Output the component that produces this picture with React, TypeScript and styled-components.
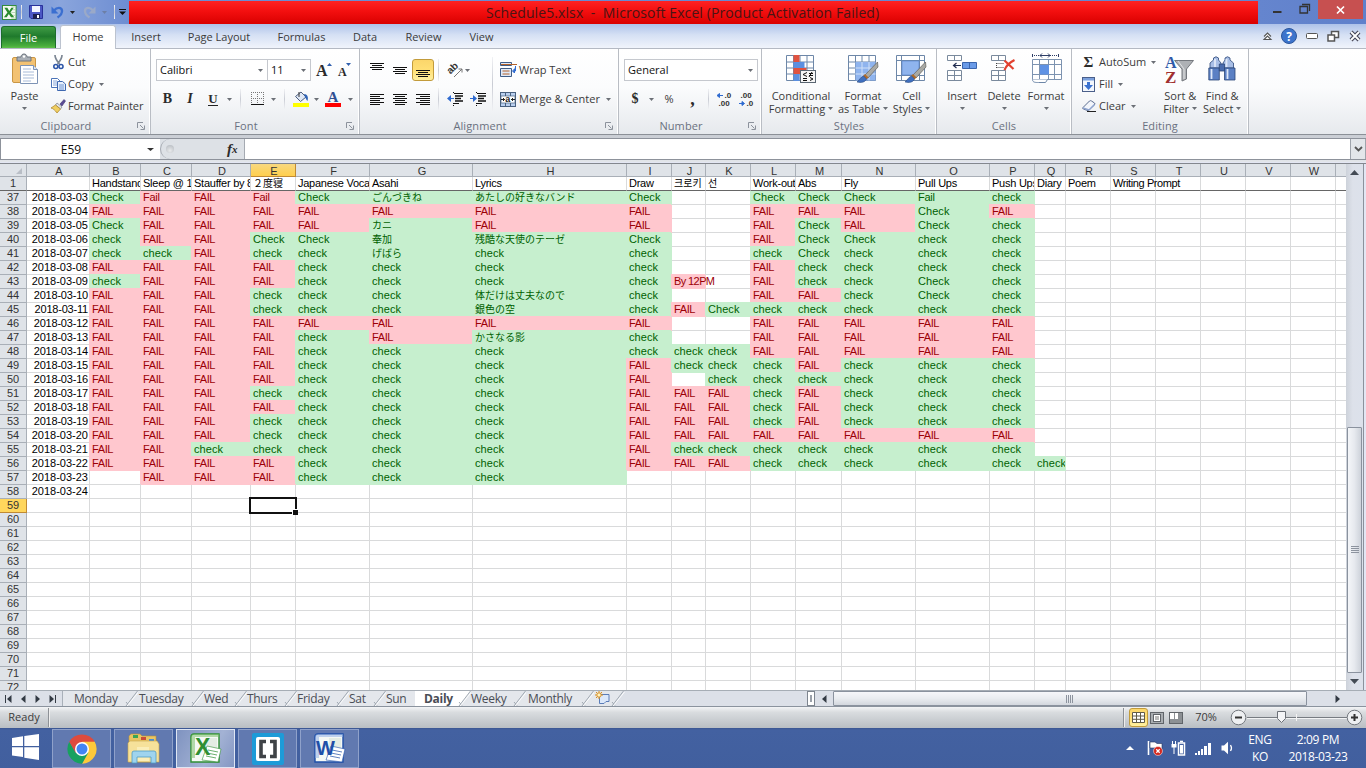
import React from 'react';
import styled, { createGlobalStyle, css } from 'styled-components';

const UI = `"Open Sans", "Noto Sans", sans-serif`;
const SHEET = `"Liberation Sans", "Noto Sans CJK JP", "Noto Sans CJK KR", sans-serif`;

const Global = createGlobalStyle`
  * { box-sizing: border-box; }
  body { margin: 0; background: #dfe3e8; overflow: hidden; }
  svg { display: block; flex: none; overflow: visible; }
`;

const Screen = styled.div`
  width: 1366px;
  height: 768px;
  display: flex;
  flex-direction: column;
  overflow: hidden;
  font-family: ${UI};
  font-size: 11px;
  color: #3b3b3b;
  white-space: pre;
`;

/* ---------- title bar ---------- */

const TitleBar = styled.header`
  height: 24px;
  display: flex;
  background: linear-gradient(90deg, #6d8fd3 0, #8aa5dc 60px, #6d8dd2 129px, #6585ce 1258px, #5f80cb 1366px);
`;

const QuickAccess = styled.div`
  width: 129px;
  display: flex;
  align-items: center;
  padding-left: 2px;
`;

const RedTitle = styled.div`
  width: 1129px;
  height: 23px;
  margin-top: 1px;
  display: flex;
  align-items: center;
  padding-left: 357px;
  background: linear-gradient(#fe2222, #f30f0f 45%, #d90000);
  color: #4a1414;
  font-size: 14px;
  letter-spacing: 0.1px;
`;

const WindowButtons = styled.div`
  display: flex;
  flex: 1;
`;

const CloseButton = styled.div`
  width: 45px;
  height: 19px;
  margin-left: 8px;
  display: flex;
  align-items: center;
  justify-content: center;
  background: #c75050;
`;

const Gap = styled.div<{ $w: number }>`
  flex: 0 0 ${(p) => p.$w}px;
`;

/* ---------- ribbon tabs ---------- */

const TabRow = styled.nav`
  height: 25px;
  display: flex;
  align-items: stretch;
  border-bottom: 1px solid #b4b9c3;
  background: linear-gradient(115deg, transparent 1333px, #6c8ed5 1352px), linear-gradient(#aec2e9, #d5e0f4 45%, #f0f4fb);
`;

const FileTab = styled.div`
  width: 55px;
  height: 22px;
  margin: 2px 0 0 1px;
  display: flex;
  align-items: center;
  justify-content: center;
  padding-bottom: 1px;
  border-radius: 3px 3px 0 0;
  border: 1px solid #1c6c2c;
  border-bottom: 0;
  background: linear-gradient(#3f9b45, #1f7a2c 45%, #4aae3d 90%, #5fc04a);
  color: #fff;
`;

const RibbonTab = styled.div<{ $w: number; $active?: boolean }>`
  width: ${(p) => p.$w}px;
  display: flex;
  align-items: center;
  justify-content: center;
  padding-top: 1px;
  ${(p) =>
    p.$active &&
    css`
      margin: 1px 0 -1px 4px;
      padding: 0 0 2px;
      background: #fff;
      border: 1px solid #bcc3cf;
      border-bottom: 0;
      border-radius: 3px 3px 0 0;
    `}
`;

const TabTools = styled.div`
  margin-left: auto;
  width: 106px;
  display: flex;
  align-items: center;
`;

/* ---------- ribbon ---------- */

const Ribbon = styled.section`
  height: 86px;
  display: flex;
  border-bottom: 1px solid #8b9097;
  background: linear-gradient(#fff, #fbfcfd 45%, #e6e9ed);
`;

const Group = styled.div<{ $w: number }>`
  width: ${(p) => p.$w}px;
  display: flex;
  flex-direction: column;
  border-right: 1px solid #b9bdc4;
  box-shadow: inset -1px 0 0 #fff;
`;

const GroupBody = styled.div`
  height: 69px;
  display: flex;
`;

const GroupFoot = styled.div`
  height: 16px;
  display: flex;
  align-items: center;
  justify-content: center;
  color: #6a7180;
  letter-spacing: 0.1px;
`;

const FootLabel = styled.div<{ $end?: boolean }>`
  flex: 1;
  text-align: center;
  padding: 0 ${(p) => (p.$end ? 4 : 0)}px 2px 0;
`;

const Stack = styled.div<{ $top: number; $gap?: number }>`
  display: flex;
  flex-direction: column;
  padding-top: ${(p) => p.$top}px;
  gap: ${(p) => p.$gap ?? 0}px;
`;

const Row = styled.div`
  height: 22px;
  display: flex;
  align-items: center;
`;

const Label = styled.span<{ $track?: number }>`
  padding-bottom: 2px;
  letter-spacing: ${(p) => p.$track ?? 0}px;
`;

const Slot = styled.div<{ $w: number; $start?: boolean }>`
  flex: 0 0 ${(p) => p.$w}px;
  display: flex;
  align-items: center;
  justify-content: ${(p) => (p.$start ? 'flex-start' : 'center')};
`;

const Big = styled.div<{ $w: number }>`
  width: ${(p) => p.$w}px;
  padding-top: 5px;
  display: flex;
  flex-direction: column;
  align-items: center;
`;

const BigLine = styled.div`
  height: 13px;
  line-height: 13px;
  display: flex;
  align-items: center;
  gap: 3px;
`;

const Combo = styled.div<{ $w: number }>`
  width: ${(p) => p.$w}px;
  height: 22px;
  display: flex;
  align-items: center;
  justify-content: space-between;
  padding: 0 4px 0 3px;
  border: 1px solid #c5c8ce;
  background: #fff;
  color: #111;
  & + & { border-left: 0; }
`;

const Rule = styled.div<{ $h: number }>`
  width: 1px;
  height: ${(p) => p.$h}px;
  background: linear-gradient(#f0f1f4, #c9ccd4, #f0f1f4);
`;

const Chosen = styled.div<{ $w?: number }>`
  flex: none;
  width: ${(p) => p.$w ?? 22}px;
  height: ${(p) => p.$w ?? 22}px;
  display: flex;
  align-items: center;
  justify-content: center;
  border: 1px solid #c29b3b;
  border-radius: 3px;
  background: linear-gradient(#fbd66b, #ffdf75 50%, #fff0a0);
`;

const Glyph = styled.span<{ $size: number; $weight?: number; $italic?: boolean; $under?: boolean }>`
  font-family: "Liberation Serif", serif;
  font-size: ${(p) => p.$size}px;
  line-height: 1;
  font-weight: ${(p) => p.$weight ?? 700};
  font-style: ${(p) => (p.$italic ? 'italic' : 'normal')};
  border-bottom: ${(p) => (p.$under ? '1px solid #222' : '0')};
  color: #2b2b2b;
`;

/* ---------- formula bar ---------- */

const FormulaBar = styled.div`
  height: 28px;
  padding-top: 3px;
  display: flex;
  background: linear-gradient(#c9cdd4, #e3e6ea);
`;

const FormulaInner = styled.div`
  height: 22px;
  flex: 1;
  display: flex;
  background: #dde1e6;
  border: 1px solid #8d929b;
  border-right: 0;
`;

const NameBox = styled.div`
  width: 159px;
  display: flex;
  align-items: center;
  background: #fff;
  color: #111;
  font-size: 12px;
`;

const FxArea = styled.div`
  width: 85px;
  display: flex;
  align-items: center;
  border: 1px solid #a5aab2;
  border-width: 0 1px 0 1px;
  border-radius: 11px 0 0 11px;
  padding-left: 4px;
`;

const Knob = styled.div`
  width: 8px;
  height: 8px;
  margin-left: 1px;
  border-radius: 50%;
  background: radial-gradient(circle at 50% 70%, #e8eaec, #b2b7bd);
`;

const FormulaInput = styled.div`
  flex: 1;
  background: #fff;
`;

const Expand = styled.div`
  width: 16px;
  display: flex;
  align-items: center;
  justify-content: center;
  border: 1px solid #9fa4ac;
  border-width: 0 1px;
  background: #e3e6ea;
`;

const Underline = styled.div`
  height: 2px;
  margin-top: -1px;
  position: relative;
  background: #e3e6f3;
  border-bottom: 1px solid #83878e;
`;

/* ---------- sheet ---------- */

const Work = styled.main`
  height: 526px;
  display: flex;
`;

const Sheet = styled.div`
  width: 1346px;
  height: 526px;
  overflow: hidden;
  background: #fff;
  font-family: ${SHEET};
`;

const HeadRow = styled.div`
  display: flex;
  height: 13px;
`;

const HeadCell = styled.div<{ $w: number; $on?: boolean }>`
  flex: 0 0 ${(p) => p.$w}px;
  min-width: 0;
  height: 13px;
  line-height: 14px;
  text-align: center;
  padding-left: 2px;
  font-size: 11px;
  color: #333;
  border-right: 1px solid ${(p) => (p.$on ? '#c08a33' : '#a9afb7')};
  border-bottom: 1px solid ${(p) => (p.$on ? '#c08a33' : '#a9afb7')};
  background: ${(p) => (p.$on ? 'linear-gradient(#f8d880, #ffcf4d)' : '#dfe3e8')};
`;

const DataRow = styled.div<{ $frozen?: boolean }>`
  display: flex;
  height: 14px;
  ${(p) => p.$frozen && css`position: relative; z-index: 1; & > * { border-bottom-color: #666 !important; }`}
`;

const RowHead = styled.div<{ $on?: boolean }>`
  flex: 0 0 27px;
  height: 14px;
  line-height: 13px;
  text-align: center;
  font-size: 11px;
  color: #333;
  border-right: 1px solid ${(p) => (p.$on ? '#c08a33' : '#a9afb7')};
  border-bottom: 1px solid ${(p) => (p.$on ? '#c08a33' : '#a9afb7')};
  background: ${(p) => (p.$on ? '#ffd65c' : '#dfe3e8')};
`;

type Tone = 'good' | 'bad' | 'plain';
const fills = { good: '#c6efce', bad: '#ffc7ce', plain: '#d9dadb' };
const inks = { good: '#006100', bad: '#9c0006', plain: '#000' };

const Cell = styled.div<{ $w: number; $tone: Tone; $right?: boolean; $clip?: boolean; $track: number; $cjk?: boolean }>`
  flex: 0 0 ${(p) => p.$w}px;
  width: ${(p) => p.$w}px;
  height: 14px;
  line-height: 13px;
  font-size: ${(p) => (p.$cjk ? 10 : 11)}px;
  letter-spacing: ${(p) => p.$track}px;
  text-align: ${(p) => (p.$right ? 'right' : 'left')};
  padding: 0 1px 0 2px;
  color: ${(p) => inks[p.$tone]};
  border-right: 1px solid ${(p) => fills[p.$tone]};
  border-bottom: 1px solid ${(p) => fills[p.$tone]};
  overflow: ${(p) => (p.$clip ? 'hidden' : 'visible')};
  ${(p) =>
    p.$tone !== 'plain' &&
    css`
      background: ${fills[p.$tone]};
      box-shadow: -1px -1px 0 ${fills[p.$tone]};
    `}
`;

const Selection = styled.div`
  position: absolute;
  left: -2px;
  top: -2px;
  width: 48px;
  height: 17px;
  border: 2px solid #111;
  z-index: 2;
  &::after {
    content: '';
    position: absolute;
    right: -3px;
    bottom: -3px;
    width: 5px;
    height: 5px;
    background: #111;
    box-shadow: -1px -1px 0 #fff;
  }
`;

const Anchor = styled.div`
  position: relative;
  width: 0;
  height: 13px;
`;

const VScroll = styled.div`
  width: 17px;
  height: 526px;
  display: flex;
  flex-direction: column;
  align-items: center;
  background: linear-gradient(90deg, #cdd2da, #dde1ea 40%, #dce1eb);
`;

const VThumb = styled.div`
  width: 15px;
  height: 246px;
  display: flex;
  align-items: center;
  justify-content: center;
  border: 1px solid #8a929e;
  border-radius: 1px;
  background: linear-gradient(90deg, #f4f6f9, #e6e9ee 50%, #cdd2da);
`;

const Edge = styled.div`
  width: 3px;
  border-left: 1px solid #8b929c;
  background: #e3e6f3;
`;

/* ---------- sheet tabs ---------- */

const TabStrip = styled.div`
  height: 17px;
  display: flex;
  background: #dce0e8;
  border-top: 1px solid #a6adb5;
  border-bottom: 1px solid #8b939e;
  color: #4a4d55;
  font-size: 12px;
`;

const Nav = styled.div`
  width: 63px;
  display: flex;
  align-items: center;
  padding-left: 5px;
  gap: 9px;
  border-right: 1px solid #a9b0b9;
`;

const SheetTab = styled.div<{ $w: number; $active?: boolean; $pad?: number }>`
  flex: 0 0 ${(p) => p.$w}px;
  height: 15px;
  line-height: 15px;
  display: flex;
  padding-left: ${(p) => p.$pad ?? 0}px;
  letter-spacing: -0.3px;
  font-weight: ${(p) => (p.$active ? 700 : 400)};
  background: ${(p) => (p.$active ? '#fff' : '#e4e7ec')};
`;

const Splitter = styled.div`
  width: 8px;
  height: 15px;
  margin-left: 183px;
  border: 1px solid #7e858f;
  background: #fff;
  display: flex;
  align-items: center;
  justify-content: center;
`;

const HThumb = styled.div`
  width: 474px;
  height: 15px;
  border: 1px solid #8a929e;
  border-radius: 1px;
  display: flex;
  align-items: center;
  justify-content: center;
  background: linear-gradient(#f6f7fa, #e9ecf0 50%, #d3d7de);
`;

/* ---------- status bar ---------- */

const StatusBar = styled.div`
  height: 21px;
  display: flex;
  align-items: center;
  background: linear-gradient(#f3f4f6, #d9dcdf 25%, #b9bec3);
`;

const StatusRule = styled.div`
  width: 2px;
  height: 19px;
  border-left: 1px solid #8d9196;
  background: #eee;
`;

/* ---------- taskbar ---------- */

const TaskBar = styled.footer`
  height: 40px;
  display: flex;
  background: linear-gradient(#3a5591, #4361a1 2px, #415f9e);
  color: #fff;
`;

const Start = styled.div`
  width: 52px;
  display: flex;
  align-items: center;
  padding: 0 0 2px 12px;
`;

const Task = styled.div<{ $active?: boolean }>`
  width: 59px;
  height: 39px;
  margin: 1px 3px 0 0;
  display: flex;
  align-items: center;
  justify-content: center;
  border: 1px solid ${(p) => (p.$active ? '#dfe6f3' : '#8fa1ca')};
  background: ${(p) => (p.$active ? 'linear-gradient(120deg, #7f93c0, #a3b2d4 60%, #8497c3)' : '#6179b0')};
`;

const Tray = styled.div`
  margin-left: auto;
  display: flex;
  align-items: center;
`;

const TrayText = styled.div<{ $w: number }>`
  width: ${(p) => p.$w}px;
  display: flex;
  flex-direction: column;
  align-items: center;
  font-size: 12px;
  line-height: 17px;
  letter-spacing: -0.35px;
`;

/* ---------- small icons ---------- */

const Down = ({ c = '#6b6f76', w = 5 }: { c?: string; w?: number }) => (
  <svg width={w} height={3} viewBox="0 0 6 3" preserveAspectRatio="none"><path d="M0 0h6L3 3z" fill={c} /></svg>
);

const Launcher = () => (
  <svg width="8" height="8"><path d="M.5 6V.5H6M3 3l3.500 3.500M7.500 3.500v4h-4" fill="none" stroke="#8c929c" /></svg>
);

const ExcelMark = ({ s }: { s: number }) => (
  <svg width={s} height={s} viewBox="0 0 16 16">
    <rect x=".5" y=".5" width="14.500" height="15" fill="#f4faf2" stroke="#2d8a34" />
    <path d="M10 2h4M10 5h4M10 8h4M10 11h4M10 14h4" stroke="#b9d8b4" />
    <path d="M2.500 3h3.200l2 3.300L10 3h2.500L9 8l4 5H9.600L7.300 9.700 5 13H2l3.800-5z" fill="#2b8c2f" />
  </svg>
);

const Save = () => (
  <svg width="14" height="14"><path d="M.5.5h13v13H2l-1.500-1.500z" fill="#4b57c4" stroke="#28319a" /><path d="M3 1h8v6H3z" fill="#f2f5ff" /><path d="M4 9h7v5H4z" fill="#1b2050" /><path d="M8 10h2v3H8z" fill="#fff" /></svg>
);

const Undo = ({ flip, c }: { flip?: boolean; c: string }) => (
  <svg width="13" height="14" viewBox="0 0 13 14"><g transform={flip ? 'translate(13 0) scale(-1 1)' : undefined}>
    <path d="M3 5.500C6 2 10.500 2 11 5.500c.3 2.500-1.500 5-4.500 7" fill="none" stroke={c} strokeWidth="2.400" /><path d="M.5 1.500v7h7z" fill={c} /></g></svg>
);

const Lines = ({ rows }: { rows: number[][] }) => (
  <svg width="15" height="13">{rows.map(([x, y, w]) => <rect key={y} x={x} y={y} width={w} height="1" fill="#111" />)}</svg>
);

/* six text lines, every second one shorter and inset by `inset` */
const paragraph = (inset: number) => [0, 2, 4, 6, 8, 10].map((y, i) => (i % 2 ? [inset, y + 1, 10] : [0, y + 1, 14]));
/* four centred lines that start at `top` */
const block = (top: number) => [0, 2, 4, 6].map((y, i) => (i % 2 ? [2, top + y, 10] : [0, top + y, 14]));

const Clipboard = () => (
  <svg width="28" height="32"><rect x="1.500" y="3.500" width="23" height="25" rx="1.500" fill="#f3c273" stroke="#c99645" /><path d="M6 3h4c0-4 6-4 6 0h4v4H6z" fill="#a9aeb5" stroke="#6d747e" /><circle cx="13" cy="2.500" r="1.200" fill="#fff" />
    <path d="M9.500 11.500h13l4 4v14h-17z" fill="#fff" stroke="#7d93b5" /><path d="M22.500 11.500v4h4" fill="#dbe5f3" stroke="#7d93b5" /><path d="M12 15h8M12 18h11M12 21h11M12 24h11M12 27h8" stroke="#a8bbd8" /></svg>
);

const Scissors = () => (
  <svg width="11" height="15"><path d="M2 0c0 4 2 6 4.500 9M9 0c0 4-2 6-4.500 9" fill="none" stroke="#7d8794" strokeWidth="1.700" /><circle cx="2.800" cy="11.500" r="2" fill="none" stroke="#2e56a8" strokeWidth="1.600" /><circle cx="8" cy="11.500" r="2" fill="none" stroke="#2e56a8" strokeWidth="1.600" /></svg>
);

const CopyIcon = () => (
  <svg width="15" height="13"><path d="M.5.5h6l2.500 2.500v6.500H.5z" fill="#fff" stroke="#4b74b8" /><path d="M2 3h4M2 5h5M2 7h5" stroke="#86a6da" /><path d="M6.500 3.500h5l3 2.500v6.500h-8z" fill="#e7effb" stroke="#3e68b0" /><path d="M8 7h5M8 9h5M8 11h5" stroke="#6f95d4" /></svg>
);

const Brush = () => (
  <svg width="15" height="14"><path d="M9 5l4-4.500 1.500 1.500L11 7z" fill="#5a4a94" stroke="#3d3270" strokeWidth=".6" /><path d="M6 4l5 4-1.500 2-5-4z" fill="#e3e4e8" stroke="#7b7f88" strokeWidth=".7" /><path d="M4.500 6l5 4-3.500 4C4 11 2 9.500 0 9z" fill="#f0cf62" stroke="#a77f23" strokeWidth=".7" /></svg>
);

const Borders = () => (
  <svg width="13" height="14"><path d="M.5 0v12M6.500 0v12M12.500 0v12M0 .5h13M0 6.500h13" stroke="#777" strokeDasharray="1 1" /><path d="M0 12.500h13" stroke="#111" /></svg>
);

const Bucket = () => (
  <svg width="17" height="16"><path d="M2.500 5.500L8 1l5 5-5.500 4.500z" fill="#dfe8f6" stroke="#4d5f80" /><path d="M6 1v5" stroke="#333" /><path d="M11 3c4 0 4.500 4 3.500 7-1.500-1-1.500-3-2.500-4z" fill="#2e63b6" /><rect x="0" y="12" width="16" height="4" fill="#ff0" /></svg>
);

const FontColor = () => (
  <svg width="17" height="16"><text x="2.500" y="11" fontFamily="Liberation Serif, serif" fontWeight="700" fontSize="15" fill="#2f4f93">A</text><rect x="0" y="12" width="16" height="4" fill="#f00" /></svg>
);

const GrowFont = ({ up }: { up?: boolean }) => (
  <svg width="15" height="16"><text x={up ? -2 : -1} y="14" fontFamily="Liberation Serif, serif" fontWeight="700" fontSize={up ? 16 : 12} fill="#2b2b2b">A</text><path d={up ? 'M9 4h5l-2.500-3z' : 'M7 1h5l-2.500 3z'} fill="#2f5fae" /></svg>
);

const Orientation = () => (
  <svg width="16" height="15"><text transform="translate(4 13) rotate(-45)" x="0" y="0" fontFamily="Liberation Sans, sans-serif" fontWeight="700" fontSize="10" fill="#333" dy="-2">ab</text><path d="M6 14l8-8M10.500 6H14v3.500" fill="none" stroke="#777" /></svg>
);

const Indent = ({ right }: { right?: boolean }) => (
  <svg width="16" height="14"><path d={right ? 'M0 6h3V3l4 3.500L3 10V7H0z' : 'M7 6H4V3L0 6.500 4 10V7h3z'} fill="#2f6bd0" /><path d="M7 1.500h9M7 11.500h5" stroke="#111" /><path d="M8 4h8M8 6.500h6M8 9h8" stroke="#111" strokeWidth="1.600" /><path d="M6.500 0v2M6.500 11v3" stroke="#111" strokeDasharray="1 1" /></svg>
);

const WrapIcon = () => (
  <svg width="17" height="16"><path d="M.5.5h11v3H.5zM.5 6.500h11v8H.5z" fill="#dfe9f7" stroke="#3f5c86" /><path d="M1 2.500h16" stroke="#b5622a" /><path d="M2.500 9h7M2.500 12h7" stroke="#b5622a" /><path d="M15.500 4v5h-2M14.500 7l-2 2 2 2z" fill="#2f6bd0" stroke="#2f6bd0" /></svg>
);

const MergeIcon = () => (
  <svg width="16" height="15"><rect x=".5" y=".5" width="15" height="14" fill="#b9cfee" stroke="#49617f" /><path d="M5.500 1v3M10.500 1v3M5.500 11v4M10.500 11v4" stroke="#49617f" /><rect x="1" y="4" width="14" height="7" fill="#fff" stroke="#49617f" strokeWidth=".7" /><text x="5.200" y="10" fontFamily="Liberation Sans, sans-serif" fontWeight="700" fontSize="9" fill="#222">a</text><path d="M1 7.500h4M11 7.500h4M3.500 6v3M12.500 6v3" stroke="#222" /></svg>
);

const Decimal = ({ more }: { more?: boolean }) => (
  <svg width="17" height="15"><g fontFamily="Liberation Sans, sans-serif" fontWeight="700" fontSize="8" fill="#333">
    <text x={more ? 8.500 : 2.500} y="6">{more ? '.0' : '.00'}</text><text x={more ? 2.500 : 8.500} y="14">{more ? '.00' : '.0'}</text></g>
    <path d={more ? 'M7 3.500H2M3.500 1.500L1 3.500l2.500 2z' : 'M1 11.500h5M4 9.500l2.500 2-2.500 2z'} fill="#2f6bd0" stroke="#2f6bd0" /></svg>
);

const gridPath = 'M.5.5h27v25H.5zM.5 7h27M.5 13h27M.5 19h27M7.500.5v25M14 .5v25M21 .5v25';

const CondIcon = () => (
  <svg width="30" height="32" viewBox="0 -1 30 32"><path d={gridPath} fill="#fff" stroke="#6d87a8" /><rect x="7.500" y="0" width="6" height="7" fill="#e0523f" /><rect x="7.500" y="7" width="11" height="6" fill="#5b8fe0" /><rect x="7.500" y="13" width="13" height="6" fill="#e0523f" /><rect x="7.500" y="19" width="6" height="7" fill="#5b8fe0" />
    <rect x="14.500" y="15.500" width="15" height="12" fill="#f6f6f6" stroke="#5a6672" /><path d="M21 17.500l-4 2 4 2M17 23.500h4M17 25.500h4M26 17l-3 5M23 18.500h4M23 20.500h4M24 22.500l3 1.500-3 1.500" fill="none" stroke="#111" strokeWidth="1" /></svg>
);

const PaintBrush = () => (
  <g><path d="M29.500 7L17 20l3 3L30 12z" fill="#a9a9a4" stroke="#60605c" strokeWidth=".7" /><path d="M17 19l3.500 3.500-2 2-3.500-3.500z" fill="#b06b2a" /><path d="M15.500 21c-3 1-4 4-6.500 6 4 1 8 .5 9.500-3z" fill="#3f6fbf" stroke="#29497f" strokeWidth=".6" /></g>
);

const TableIcon = () => (
  <svg width="31" height="32" viewBox="0 -1 31 32"><path d={gridPath} fill="#fff" stroke="#6d87a8" /><rect x="7.500" y="7" width="20" height="18.500" fill="#8fb4ee" /><path d="M7.500 13h20M7.500 19h20M14 7v18.500M21 7v18.500" stroke="#cfe0f8" /><PaintBrush /></svg>
);

const StyleIcon = () => (
  <svg width="31" height="32" viewBox="0 -1 31 32"><path d="M.5.5h28v25H.5zM.5 5.500h28M.5 20.500h28M5.500.5v25M23.500.5v25" fill="#fff" stroke="#6d87a8" /><rect x="6" y="6" width="17" height="14" fill="#8fb4ee" stroke="#5681c8" strokeWidth=".6" /><PaintBrush /></svg>
);

const InsertIcon = () => (
  <svg width="31" height="32" viewBox="0 -1 31 32"><path d="M.5.5h14v5H.5zM7.500.5v5M.5 15.500h14v10H.5zM7.500 15.500v10M.5 20.500h14" fill="#fff" stroke="#7a8a9d" /><path d="M15.500 7.500h14v6h-14z" fill="#6a9be8" stroke="#3a65ad" /><path d="M22.500 7.500v6" stroke="#3a65ad" /><path d="M6 10.500h8M9.500 8l-3 2.500 3 2.500" stroke="#222e50" fill="none" strokeWidth="1.200" /></svg>
);

const DeleteIcon = () => (
  <svg width="26" height="32" viewBox="0 -1 26 32"><path d="M.5.5h14v5H.5zM7.500.5v5M.5 15.500h14v10H.5zM7.500 15.500v10M.5 20.500h14" fill="#fff" stroke="#7a8a9d" /><path d="M5.500 8.500h8M5.500 12.500h8M5.500 8v5" fill="none" stroke="#444" strokeDasharray="1 1" /><path d="M13.500 5.500l9 8.500M23.500 5c-4 2-8 5-10 10" stroke="#e2412f" strokeWidth="2.200" fill="none" /></svg>
);

const FormatIcon = () => (
  <svg width="31" height="32" viewBox="0 -1 31 32"><path d="M1 .5h28M1.500-1v3M27.500-1v3" stroke="#2d3d66" strokeDasharray="1 1" /><path d="M9 .5h10M11-1.500L9 .5l2 2M17-1.500l2 2-2 2" stroke="#2d3d66" fill="none" /><path d="M1.500 4.500h29v20h-29zM1.500 9.500h29M1.500 19.500h29M8.500 4.500v20M17.500 4.500v20M23.500 4.500v20" fill="#fff" stroke="#7d93b0" /><rect x="9" y="10" width="9" height="9.500" fill="#5f92e4" /><path d="M1.500 24.500c0 3 3 3 6 3h7l2-3" fill="#fff" stroke="#6d87a8" /></svg>
);

const FillIcon = () => (
  <svg width="13" height="15"><rect x=".5" y=".5" width="12" height="14" fill="#f3f7fd" stroke="#4a5f8a" /><rect x="1" y="1" width="11" height="2.500" fill="#7ba0dc" /><path d="M5 5h3v3h3l-4.500 5L2 8h3z" fill="#3b72d0" /></svg>
);

const Eraser = () => (
  <svg width="14" height="12"><path d="M1 7.500L7.500 1q1-.7 2 0l3 2q.8.8 0 1.800L7 10q-1 .8-2 .3L1.300 9Q.3 8.500 1 7.500z" fill="#f2f5fb" stroke="#5b6c8e" /><path d="M1 8l6 2 5.500-5.500" fill="none" stroke="#8ea4cf" strokeWidth="1.500" /><path d="M5 11.500h9" stroke="#222" /></svg>
);

const SortIcon = () => (
  <svg width="30" height="32"><path d="M9.500 6.500h19L21.500 15v10l-4.500 2V15z" fill="#aeb1b5" stroke="#74787e" /><path d="M13 7l6 8v10" fill="none" stroke="#e0e2e4" /><g fontFamily="Liberation Serif, serif" fontWeight="700"><text x="0" y="13.500" fontSize="16" fill="#2f5aa8">A</text><text x="0" y="28.500" fontSize="17" fill="#a03030">Z</text></g></svg>
);

const Binoculars = () => (
  <svg width="28" height="32"><g stroke="#2c4778" strokeWidth=".8"><path d="M5.500 4q2.500-2.500 5 0v2l2.500 3v5H2V9l3.500-3zM17 4q2.500-2.500 5 0v2l3.500 3v5H15V9l2-3z" fill="#a9bfe6" /><path d="M.8 14h10.500v12H.8zM16.500 14h10.500v12H16.500z" fill="#5b80c4" /><path d="M11.300 10h5.200v7h-5.200z" fill="#4a6cae" /></g><path d="M3.500 15v10M19.500 15v10M7 5v8M18.500 5v8" stroke="#dfe8f8" strokeWidth="1.800" /></svg>
);

const Help = () => (
  <svg width="16" height="16"><circle cx="8" cy="8" r="7.500" fill="#3c74cc" stroke="#2b559c" /><text x="8" y="12.500" textAnchor="middle" fontFamily="Open Sans, sans-serif" fontWeight="700" fontSize="12" fill="#fff">?</text></svg>
);

const NavArrow = ({ left, bar }: { left?: boolean; bar?: boolean }) => (
  <svg width={bar ? 7 : 5} height="8"><g transform={left ? undefined : `translate(${bar ? 7 : 5} 0) scale(-1 1)`} fill="#333a44">{bar && <rect width="1" height="8" />}<path d={bar ? 'M6.500 0v8L2 4z' : 'M4.500 0v8L0 4z'} /></g></svg>
);

const Slash = ({ l = '#e4e7ec', r = '#e4e7ec' }: { l?: string; r?: string }) => (
  <svg width="12" height="15"><rect width="12" height="15" fill={l} /><path d="M12 0L0 15h12z" fill={r} /><path d="M0 15L11.500 0M0 11l3 3.500" fill="none" stroke="#98a1ac" strokeWidth=".9" /><path d="M1.200 15L12.500 1" fill="none" stroke="#fff" strokeWidth=".9" /></svg>
);

const Grip = ({ v }: { v?: boolean }) => (
  <svg width="8" height="8"><path d={v ? 'M0 .5h8M0 2.500h8M0 4.500h8M0 6.500h8' : 'M.5 0v8M2.500 0v8M4.500 0v8M6.500 0v8'} stroke="#8c939e" /></svg>
);

/* ---------- taskbar icons ---------- */

const Windows = () => (
  <svg width="27" height="26"><path d="M0 4l11-1.700V12H0zM12.300 2.100L27 0v12H12.300zM0 13.300h11V23L0 21.400zM12.300 13.300H27V26l-14.700-2.200z" fill="#fff" /></svg>
);

const Chrome = () => (
  <svg width="30" height="30" viewBox="-15 -15 30 30"><path d="M0 0L-12.700-7.300A14.700 14.700 0 0 1 12.700-7.300z" fill="#dd4b3e" /><path d="M0-7.300h12.700A14.700 14.700 0 0 1 0 14.700L6 3z" fill="#fdc93a" /><path d="M-12.700-7.300A14.700 14.700 0 0 0 0 14.700L6.300 3.700 0 0-6.300 3.700z" fill="#18a15f" /><path d="M-12.700-7.300L-6.300 3.700 0 0V-7.300h12.700z" fill="#dd4b3e" /><circle r="7" fill="#fff" /><circle r="5.500" fill="#4285f4" /></svg>
);

const Folder = () => (
  <svg width="34" height="32"><path d="M2 3l2-2h9l2 2h14v26H2z" fill="#e8c564" stroke="#b8923a" strokeWidth=".6" /><path d="M6 2h5v3H6z" fill="#3aa655" /><path d="M14 4h5v3h-5z" fill="#c94c3a" /><path d="M22 6h5v3h-5z" fill="#4a8fd4" /><path d="M3 8h27l2 3v18H1V10z" fill="#f6e19a" stroke="#c9a54c" strokeWidth=".6" /><path d="M10 14h12v14H10z" fill="#fbeeb8" /><path d="M5 20q0-2 2-2h20q2 0 2 2v10h-5v-6H10v6H5z" fill="#9fd4ee" stroke="#4f9cc4" strokeWidth=".8" /></svg>
);

const OfficeIcon = ({ c, d, letter }: { c: string; d: string; letter: string }) => (
  <svg width="32" height="31"><path d="M4 1h25v28H1V4q0-3 3-3z" fill="#f5f9f5" stroke={c} strokeWidth="1.400" /><path d="M4 1h25v3H5v21H1V4q0-3 3-3z" fill={d} opacity=".55" /><path d="M15 5h12v18H15z" fill="#e4ede4" /><path d="M17 13l14 3-3 13-16-2z" fill="#fff" stroke={c} strokeWidth=".6" /><path d="M18 17l10 2M17 20l10 2M16 23l10 2" stroke={c} strokeWidth="1" opacity=".7" /><text x={letter === 'W' ? 2 : 5} y="22" fontFamily="Liberation Sans, sans-serif" fontWeight="700" fontSize={letter === 'W' ? 20 : 23} fill={c}>{letter}</text></svg>
);

const Brackets = () => (
  <svg width="32" height="32"><rect width="32" height="32" rx="2" fill="#1d9bd8" /><rect x="4" y="4" width="24" height="24" rx="2" fill="#fff" /><path d="M14 8.500H9v15h5M18 8.500h5v15h-5" fill="none" stroke="#3f4347" strokeWidth="3.600" /></svg>
);

const FlagIcon = () => (
  <svg width="17" height="16"><path d="M1.500 1v14" stroke="#fff" strokeWidth="1.600" /><path d="M3 2h5l2 1.500h5V9h-5L8 8H3z" fill="#fff" stroke="#24365f" strokeWidth=".6" /><circle cx="11" cy="11" r="4.500" fill="#d4281f" stroke="#fff" strokeWidth=".5" /><path d="M9.300 9.300l3.400 3.400M12.700 9.300l-3.400 3.400" stroke="#fff" strokeWidth="1.300" /></svg>
);

const Battery = () => (
  <svg width="15" height="16"><path d="M7.500 3h6v12h-6z" fill="#4361a1" stroke="#fff" strokeWidth="1.500" /><path d="M9 1.500h3" stroke="#fff" strokeWidth="1.600" /><rect x="9" y="5" width="3" height="8.500" fill="#fff" /><path d="M1.500 1v3M4.500 1v3M3 7v7" stroke="#fff" /><path d="M.5 4h5v3.500h-5z" fill="#fff" /></svg>
);

const Signal = () => (
  <svg width="16" height="13"><path d="M0 11h2v2H0zM3 9h2v4H3zM6 7h2v6H6zM9 4h3v9H9zM13 1h3v12h-3z" fill="#fff" /></svg>
);

const Speaker = () => (
  <svg width="13" height="14"><path d="M.5 4.500H3L7 .8v12.400L3 9.500H.5z" fill="#fff" /><path d="M9.500 4q2 3 0 6" fill="none" stroke="#fff" strokeWidth="1.300" /></svg>
);

/* ---------- sheet data ---------- */

const columns: [string, number][] = [
  ['A', 63], ['B', 51], ['C', 51], ['D', 59], ['E', 45], ['F', 74], ['G', 103], ['H', 154], ['I', 45], ['J', 34], ['K', 45],
  ['L', 45], ['M', 46], ['N', 74], ['O', 74], ['P', 45], ['Q', 31], ['R', 45], ['S', 45], ['T', 45], ['U', 45], ['V', 45], ['W', 45], ['', 11],
];

const headings = ['', 'Handstand', 'Sleep @ 11', 'Stauffer by 8', '２度寝', 'Japanese Vocab', 'Asahi', 'Lyrics', 'Draw', '크로키', '선', 'Work-out', 'Abs', 'Fly', 'Pull Ups', 'Push Ups', 'Diary', 'Poem', 'Writing Prompt'];

/* c/C = check, F/f = fail, g = fail on a green fill, . = blank; anything else is literal text */
const entries = [
  'C f F f C ごんづきね あたしの好きなバンド C . . C C C g c',
  'F F F F F F F F . . F F F C F',
  'C F F F F カニ F F . . F C F C c',
  'c F F C C 奉加 残酷な天使のテーゼ C . . F C C c c',
  'c c F c c げばら c c . . c C c c c',
  'F F F F c c c c . . F c c c c',
  'c F F F c c c c By_12PM . F c c C c',
  'F F F c c c 体だけは丈夫なので c . . F F c C c',
  'F F F c c c 銀色の空 c F C c c c c c',
  'F F F F F F F F . . F F F F F',
  'F F F F c F かさなる影 c . . F F F F F',
  'F F F F c c c c c c F F F F F',
  'F F F F c c c F c c c F c c c',
  'F F F F c c c F . c c c c c c',
  'F F F c c c c F F F c F c c c',
  'F F F F c c c F F F c F c c c',
  'F F F c c c c F F F c F c c c',
  'F F F c c c c F F F F F F F F',
  'F F c c c c c F c c c c c c c',
  'F F F F c c c F F F c c c c c c',
  '. F F F c c c',
  '',
];

const words: Record<string, [string, Tone]> = {
  c: ['check', 'good'], C: ['Check', 'good'], F: ['FAIL', 'bad'], f: ['Fail', 'bad'], g: ['Fail', 'good'], '.': ['', 'plain'], By_12PM: ['By 12PM', 'bad'],
};

const isCjk = (t: string) => /[\u3000-\uffff]/.test(t);
const trackFor = (t: string) => {
  if (t === 'FAIL') return -0.4;
  if (isCjk(t)) return 0;
  if (/^20/.test(t)) return /-1\d$/.test(t) ? -0.2 : 0;
  if (/eck$/.test(t)) return 0.05;
  if (t === 'By 12PM') return -0.6;
  if (t === 'Writing Prompt') return -0.4;
  return -0.25;
};

const SheetRow = ({ n }: { n: number }) => {
  const tokens = n >= 37 && n <= 58 ? entries[n - 37].split(' ').filter(Boolean) : [];
  return (
    <DataRow $frozen={n === 1}>
      <RowHead $on={n === 59}>{n}</RowHead>
      {columns.map(([name, w], i) => {
        let text = '';
        let tone: Tone = 'plain';
        if (n === 1) text = headings[i] ?? '';
        else if (i === 0 && n <= 58) text = `2018-03-${String(n - 34).padStart(2, '0')}`;
        else if (tokens[i - 1]) [text, tone] = words[tokens[i - 1]] ?? [tokens[i - 1], 'good'];
        const spill = text === 'By 12PM' || text === 'Writing Prompt';
        return (
          <React.Fragment key={i}>
            {n === 59 && name === 'E' && <Anchor><Selection /></Anchor>}
            <Cell $w={w} $tone={tone} $right={i === 0} $clip={!spill && text !== ''} $track={trackFor(text)} $cjk={isCjk(text)}>{text}</Cell>
          </React.Fragment>
        );
      })}
    </DataRow>
  );
};

const rowNumbers = [1, ...Array.from({ length: 36 }, (_, i) => 37 + i)];

/* ---------- page ---------- */

const Foot = ({ label, end }: { label: string; end?: boolean }) => (
  <GroupFoot><FootLabel $end={end}>{label}</FootLabel>{end && <Slot $w={10}><Launcher /></Slot>}{end && <Gap $w={4} />}</GroupFoot>
);

export default function App() {
  return (
    <Screen>
      <Global />
      <TitleBar>
        <QuickAccess>
          <ExcelMark s={15} /><Gap $w={4} /><Rule $h={14} /><Gap $w={7} /><Save /><Gap $w={8} /><Undo c="#3b6fd0" /><Gap $w={6} /><Down c="#222" />
          <Gap $w={8} /><Undo flip c="#9aa9c8" /><Gap $w={6} /><Down c="#6d7fa5" /><Gap $w={7} /><Rule $h={14} /><Gap $w={4} />
          <svg width="7" height="6"><path d="M0 .5h7" stroke="#111" /><path d="M0 2.500h7L3.500 6z" fill="#111" /></svg>
        </QuickAccess>
        <RedTitle>Schedule5.xlsx  -  Microsoft Excel (Product Activation Failed)</RedTitle>
        <WindowButtons>
          <Gap $w={15} />
          <svg width="9" height="14"><path d="M0 12h8.500" stroke="#333" strokeWidth="2" /></svg>
          <Gap $w={17} />
          <svg width="11" height="15"><path d="M1 6.500h7.500v6.500H1zM3 4.500h7.500V11" fill="none" stroke="#333" strokeWidth="1.300" /></svg>
          <CloseButton><svg width="9" height="8"><path d="M1 .5l7 7M8 .5l-7 7" stroke="#fff" strokeWidth="1.700" /></svg></CloseButton>
        </WindowButtons>
      </TitleBar>
      <TabRow>
        <FileTab>File</FileTab>
        <RibbonTab $w={56} $active>Home</RibbonTab>
        <RibbonTab $w={60}>Insert</RibbonTab>
        <RibbonTab $w={86}>Page Layout</RibbonTab>
        <RibbonTab $w={79}>Formulas</RibbonTab>
        <RibbonTab $w={48}>Data</RibbonTab>
        <RibbonTab $w={69}>Review</RibbonTab>
        <RibbonTab $w={47}>View</RibbonTab>
        <TabTools>
          <Gap $w={3} />
          <svg width="9" height="8"><path d="M1 4.500L4.500 1 8 4.500M1 7.500h7L4.500 4z" fill="#fff" stroke="#555" strokeWidth="1.100" /></svg>
          <Gap $w={9} /><Help /><Gap $w={9} />
          <svg width="12" height="6"><rect x=".5" y=".5" width="11" height="5" rx="1" fill="#fff" stroke="#555" /></svg>
          <Gap $w={9} />
          <svg width="12" height="12"><path d="M4.500 1.500h7v6h-7z" fill="#fff" stroke="#555" strokeWidth="1.500" /><path d="M1 5h6.500v6H1z" fill="#fff" stroke="#555" strokeWidth="1.500" /></svg>
          <Gap $w={10} />
          <svg width="12" height="10"><path d="M2 1l8 8M10 1L2 9" stroke="#445" strokeWidth="4" /><path d="M2 1l8 8M10 1L2 9" stroke="#fff" strokeWidth="1.800" /></svg>
        </TabTools>
      </TabRow>

      <Ribbon>
        <Group $w={151}>
          <GroupBody>
            <Big $w={49}><Clipboard /><Gap $w={3} /><BigLine>Paste</BigLine><BigLine><Down /></BigLine></Big>
            <Stack $top={2}>
              <Row><Slot $w={19}><Scissors /></Slot><Label>Cut</Label></Row>
              <Row><Slot $w={19}><CopyIcon /></Slot><Label>Copy</Label><Gap $w={5} /><Down /></Row>
              <Row><Slot $w={19}><Brush /></Slot><Label $track={-0.1}>Format Painter</Label></Row>
            </Stack>
          </GroupBody>
          <Foot label="Clipboard" end />
        </Group>

        <Group $w={209}>
          <GroupBody>
            <Gap $w={5} />
            <Stack $top={10} $gap={7}>
              <Row><Combo $w={112}><Label>Calibri</Label><Down /></Combo><Combo $w={43}><Label>11</Label><Down /></Combo><Gap $w={5} /><Slot $w={18}><GrowFont up /></Slot><Gap $w={4} /><Slot $w={16}><GrowFont /></Slot></Row>
              <Row>
                <Slot $w={23}><Glyph $size={14}>B</Glyph></Slot><Slot $w={22}><Glyph $size={14} $italic>I</Glyph></Slot><Slot $w={24}><Glyph $size={13} $under>U</Glyph></Slot><Slot $w={9}><Down /></Slot>
                <Slot $w={13}><Rule $h={20} /></Slot><Slot $w={21}><Borders /></Slot><Slot $w={11}><Down /></Slot><Slot $w={10}><Rule $h={20} /></Slot>
                <Slot $w={24}><Bucket /></Slot><Slot $w={7}><Down /></Slot><Slot $w={27}><FontColor /></Slot><Slot $w={6}><Down /></Slot>
              </Row>
            </Stack>
          </GroupBody>
          <Foot label="Font" end />
        </Group>

        <Group $w={259}>
          <GroupBody>
            <Gap $w={6} />
            <Stack $top={10} $gap={7}>
              <Row><Slot $w={23}><Lines rows={block(-1)} /></Slot><Slot $w={23}><Lines rows={block(3)} /></Slot><Slot $w={22}><Chosen><Lines rows={block(6)} /></Chosen></Slot>
                <Slot $w={8}><Rule $h={22} /></Slot><Gap $w={5} /><Slot $w={17}><Orientation /></Slot><Slot $w={7}><Down /></Slot></Row>
              <Row><Slot $w={23}><Lines rows={paragraph(0)} /></Slot><Slot $w={23}><Lines rows={paragraph(2)} /></Slot><Slot $w={23}><Lines rows={paragraph(4)} /></Slot>
                <Slot $w={7}><Rule $h={22} /></Slot><Slot $w={26}><Indent /></Slot><Slot $w={20}><Indent right /></Slot></Row>
            </Stack>
            <Gap $w={4} />
            <Stack $top={8}><Rule $h={54} /></Stack>
            <Gap $w={7} />
            <Stack $top={10} $gap={7}>
              <Row><Slot $w={19} $start><WrapIcon /></Slot><Label>Wrap Text</Label></Row>
              <Row><Slot $w={19} $start><MergeIcon /></Slot><Label>Merge &amp; Center</Label><Gap $w={6} /><Down /></Row>
            </Stack>
          </GroupBody>
          <Foot label="Alignment" end />
        </Group>

        <Group $w={143}>
          <GroupBody>
            <Gap $w={5} />
            <Stack $top={10} $gap={7}>
              <Row><Combo $w={134}><Label>General</Label><Down /></Combo></Row>
              <Row><Slot $w={22}><Glyph $size={14}>$</Glyph></Slot><Slot $w={10}><Down /></Slot><Slot $w={26}><FootLabel>%</FootLabel></Slot><Slot $w={21}><Glyph $size={18}>,</Glyph></Slot><Slot $w={10}><Rule $h={20} /></Slot><Slot $w={23}><Decimal more /></Slot><Slot $w={21}><Decimal /></Slot></Row>
            </Stack>
          </GroupBody>
          <Foot label="Number" end />
        </Group>

        <Group $w={175}>
          <GroupBody>
            <Gap $w={4} />
            <Big $w={70}><CondIcon /><Gap $w={3} /><BigLine>Conditional</BigLine><BigLine>Formatting<Down /></BigLine></Big>
            <Big $w={54}><TableIcon /><Gap $w={3} /><BigLine>Format</BigLine><BigLine>as Table<Down /></BigLine></Big>
            <Big $w={43}><StyleIcon /><Gap $w={3} /><BigLine>Cell</BigLine><BigLine>Styles<Down /></BigLine></Big>
          </GroupBody>
          <Foot label="Styles" />
        </Group>

        <Group $w={135}>
          <GroupBody>
            <Gap $w={4} />
            <Big $w={42}><InsertIcon /><Gap $w={3} /><BigLine>Insert</BigLine><BigLine><Down /></BigLine></Big>
            <Big $w={42}><DeleteIcon /><Gap $w={3} /><BigLine>Delete</BigLine><BigLine><Down /></BigLine></Big>
            <Big $w={42}><FormatIcon /><Gap $w={3} /><BigLine>Format</BigLine><BigLine><Down /></BigLine></Big>
          </GroupBody>
          <Foot label="Cells" />
        </Group>

        <Group $w={177}>
          <GroupBody>
            <Gap $w={6} />
            <Stack $top={2}>
              <Row><Slot $w={21}><Glyph $size={15}>Σ</Glyph></Slot><Label>AutoSum</Label><Gap $w={5} /><Down /></Row>
              <Row><Slot $w={21}><FillIcon /></Slot><Label>Fill</Label><Gap $w={5} /><Down /></Row>
              <Row><Slot $w={21}><Eraser /></Slot><Label>Clear</Label><Gap $w={5} /><Down /></Row>
            </Stack>
            <Gap $w={4} />
            <Big $w={40}><SortIcon /><Gap $w={3} /><BigLine>Sort &amp;</BigLine><BigLine>Filter<Down /></BigLine></Big>
            <Big $w={44}><Binoculars /><Gap $w={3} /><BigLine>Find &amp;</BigLine><BigLine>Select<Down /></BigLine></Big>
          </GroupBody>
          <Foot label="Editing" />
        </Group>
      </Ribbon>

      <FormulaBar>
        <FormulaInner>
          <NameBox><Slot $w={140}>E59</Slot><Slot $w={19}><Down w={7} c="#333" /></Slot></NameBox>
          <FxArea><Knob /><Gap $w={53} /><Glyph $size={15} $italic>f</Glyph><Glyph $size={11} $italic>x</Glyph></FxArea>
          <FormulaInput />
          <Expand><svg width="7" height="5"><path d="M0 0l3.500 3.500L7 0" fill="none" stroke="#555" strokeWidth="1.800" /></svg></Expand>
        </FormulaInner>
      </FormulaBar>
      <Underline />

      <Work>
        <Sheet>
          <HeadRow>
            <HeadCell $w={27}><svg width="22" height="12"><path d="M20 4v6h-6z" fill="#b9bec6" /></svg></HeadCell>
            {columns.map(([name, w], i) => <HeadCell key={i} $w={w} $on={name === 'E'}>{name}</HeadCell>)}
          </HeadRow>
          {rowNumbers.map((n) => <SheetRow key={n} n={n} />)}
        </Sheet>
        <VScroll>
          <Stack $top={6} /><svg width="9" height="5"><path d="M4.500 0L9 5H0z" fill="#444b55" /></svg><Stack $top={252} />
          <VThumb><Grip v /></VThumb>
          <Stack $top={6} /><svg width="9" height="5"><path d="M4.500 5L9 0H0z" fill="#444b55" /></svg>
        </VScroll>
        <Edge />
      </Work>

      <TabStrip>
        <Nav><NavArrow left bar /><NavArrow left /><NavArrow /><NavArrow bar /></Nav>
        <SheetTab $w={63} $pad={11}>Monday</SheetTab><Slash />
        <SheetTab $w={54} $pad={1}>Tuesday</SheetTab><Slash />
        <SheetTab $w={31}>Wed</SheetTab><Slash />
        <SheetTab $w={38}>Thurs</SheetTab><Slash />
        <SheetTab $w={40}>Friday</SheetTab><Slash />
        <SheetTab $w={25}>Sat</SheetTab><Slash />
        <SheetTab $w={29}>Sun</SheetTab>
        <SheetTab $w={44} $active $pad={9}>Daily</SheetTab><Slash l="#fff" />
        <SheetTab $w={43}>Weeky</SheetTab><Slash />
        <SheetTab $w={56} $pad={2}>Monthly</SheetTab><Slash />
        <SheetTab $w={18} $pad={1}>
          <svg width="15" height="14"><path d="M4.500 3.500h9.500v7h-3l-2 2H4.500z" fill="#dce8fa" stroke="#5a7cb8" /><circle cx="4" cy="4" r="2.200" fill="#fff3c0" stroke="#d98e1f" /><path d="M4 0v1.500M4 6.500V8M0 4h1.500M6.500 4H8M1 1l1.300 1.300M7 1L5.700 2.300M1 7l1.300-1.300" stroke="#d98e1f" /></svg>
        </SheetTab>
        <Slash r="#dce0e8" />
        <Splitter><svg width="2" height="7"><rect width="2" height="7" fill="#9aa0a9" /></svg></Splitter>
        <Slot $w={18}><NavArrow left /></Slot>
        <HThumb><Grip /></HThumb>
        <Gap $w={27} /><Slot $w={6}><NavArrow /></Slot>
      </TabStrip>

      <StatusBar>
        <Slot $w={48}><Label>Ready</Label></Slot><StatusRule /><Gap $w={1073} /><StatusRule /><Gap $w={4} />
        <Chosen $w={19}><svg width="13" height="11"><path d="M.5.5h12v10H.5zM.5 4h12M.5 7.300h12M4.500.5v10M8.500.5v10" fill="#fff" stroke="#5f5a48" /></svg></Chosen>
        <Gap $w={2} />
        <svg width="15" height="12"><rect x=".5" y=".5" width="13" height="11" fill="#a9adb1" stroke="#606469" /><rect x="3.500" y="2.500" width="7" height="7" fill="#fff" stroke="#606469" /><path d="M5 5h4M5 7h4" stroke="#777" /></svg>
        <Gap $w={4} />
        <svg width="15" height="12"><rect x=".5" y=".5" width="13" height="11" fill="#8c9094" stroke="#606469" /><path d="M1 1h4v6H1zM6 1h3v6H6z" fill="#fff" /></svg>
        <Gap $w={11} /><Slot $w={22}><Label>70%</Label></Slot><Gap $w={13} />
        <svg width="134" height="17"><path d="M17 8.500h100" stroke="#767b81" /><path d="M17 9.500h100" stroke="#f2f3f4" /><path d="M66.500 5v7" stroke="#f4f4f4" /><circle cx="8.500" cy="8.500" r="7.300" fill="#eef0f2" stroke="#73787e" /><path d="M5 8.500h7" stroke="#333" strokeWidth="2" /><path d="M47.500 2.500h8v7l-4 4-4-4z" fill="#f4f5f7" stroke="#6b7077" /><circle cx="124.500" cy="8.500" r="7.300" fill="#eef0f2" stroke="#73787e" /><path d="M121 8.500h7M124.500 5v7" stroke="#333" strokeWidth="2" /></svg>
      </StatusBar>

      <TaskBar>
        <Start><Windows /></Start>
        <Task><Chrome /></Task>
        <Task><Folder /></Task>
        <Task $active><OfficeIcon c="#2f8f33" d="#7cc06b" letter="X" /></Task>
        <Task><Brackets /></Task>
        <Task><OfficeIcon c="#1f4fa8" d="#8fb0e6" letter="W" /></Task>
        <Tray>
          <svg width="8" height="4"><path d="M0 4h8L4 0z" fill="#fff" /></svg><Gap $w={13} />
          <FlagIcon /><Gap $w={7} /><Battery /><Gap $w={9} /><Signal /><Gap $w={10} /><Speaker /><Gap $w={11} />
          <TrayText $w={30}><span>ENG</span><span>KO</span></TrayText><Gap $w={7} />
          <TrayText $w={72}><span>2:09 PM</span><span>2018-03-23</span></TrayText><Gap $w={12} />
        </Tray>
      </TaskBar>
    </Screen>
  );
}
